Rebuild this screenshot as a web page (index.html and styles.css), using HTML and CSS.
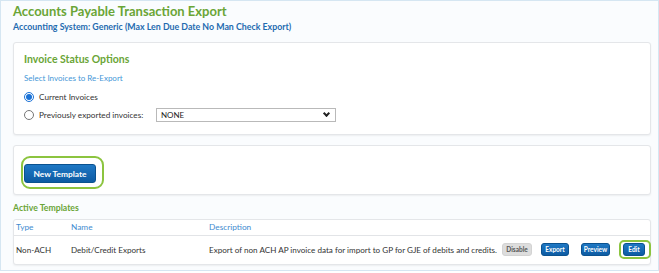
FILE: index.html
```html
<!DOCTYPE html>
<html lang="en">
<head>
    <meta charset="UTF-8">
    <title>Accounts Payable Transaction Export</title>
    <link rel="stylesheet" href="styles.css">
</head>
<body>
    <div class="page">
        <h1 class="page-title">Accounts Payable Transaction Export</h1>
        <div class="system-name">Accounting System: Generic (Max Len Due Date No Man Check Export)</div>

        <div class="panel status-panel">
            <h2 class="panel-title">Invoice Status Options</h2>
            <div class="hint">Select Invoices to Re-Export</div>
            <label class="radio-row">
                <input type="radio" name="status" checked>
                <span>Current Invoices</span>
            </label>
            <label class="radio-row">
                <input type="radio" name="status">
                <span class="radio-label">Previously exported invoices:</span>
                <span class="select-wrap">
                    <select class="export-select">
                        <option>NONE</option>
                    </select>
                </span>
            </label>
        </div>

        <div class="panel template-panel">
            <div class="focus-ring">
                <button class="btn btn-large">New Template</button>
            </div>
        </div>

        <div class="section-title">Active Templates</div>
        <div class="panel table-panel">
            <table class="templates">
                <colgroup>
                    <col class="col-type">
                    <col class="col-name">
                    <col class="col-desc">
                    <col>
                </colgroup>
                <thead>
                    <tr>
                        <th>Type</th>
                        <th>Name</th>
                        <th>Description</th>
                        <th></th>
                    </tr>
                </thead>
                <tbody>
                    <tr>
                        <td>Non-ACH</td>
                        <td>Debit/Credit Exports</td>
                        <td>Export of non ACH AP invoice data for import to GP for GJE of debits and credits.</td>
                        <td>
                            <div class="actions">
                                <button class="btn btn-small btn-grey btn-disable">Disable</button>
                                <button class="btn btn-small btn-export">Export</button>
                                <button class="btn btn-small btn-preview">Preview</button>
                                <span class="focus-ring small-ring"><button class="btn btn-small btn-edit">Edit</button></span>
                            </div>
                        </td>
                    </tr>
                </tbody>
            </table>
        </div>
    </div>
</body>
</html>
```

FILE: styles.css
```css
* {
    margin: 0;
    padding: 0;
    box-sizing: border-box;
    font-family: Lato, 'Open Sans', sans-serif;
}

body {
    background-color: #fff;
    width: 659px;
    height: 273px;
    overflow: hidden;
}

.page {
    background-color: #fafcfe;
    border: 1px solid #d5e6f2;
    height: 271px;
    padding: 1px 7px 0 12px;
}

.page-title {
    color: #6aa536;
    font-size: 13px;
    font-weight: 700;
    line-height: 18px;
}

.system-name {
    color: #1f6bb0;
    font-size: 8.8px;
    font-weight: 700;
    line-height: 14px;
}

.panel {
    background-color: #fff;
    border: 1px solid #e4e6e9;
    border-radius: 3px;
    box-shadow: 0 1px 2px rgba(0, 0, 0, 0.06);
}

.status-panel {
    margin-top: 8px;
    height: 93px;
    padding: 8px 10px 0 10px;
}

.panel-title {
    color: #6aa536;
    font-size: 10.5px;
    font-weight: 700;
    line-height: 16px;
}

.hint {
    color: #4597d7;
    font-size: 8px;
    line-height: 12px;
    margin-top: 5px;
    margin-bottom: 4px;
}

.radio-row {
    display: flex;
    align-items: center;
    height: 18px;
    font-size: 8.2px;
    color: #333;
    white-space: nowrap;
}

.radio-row input {
    width: 10px;
    height: 10px;
    margin: 0 5px 0 0;
    accent-color: #1b72d6;
}

.radio-label {
    width: 117px;
}

.select-wrap {
    position: relative;
    display: inline-flex;
}

.select-wrap::after {
    content: '';
    position: absolute;
    right: 7px;
    top: 3px;
    width: 3px;
    height: 3px;
    border-right: 2px solid #222;
    border-bottom: 2px solid #222;
    transform: rotate(45deg);
    pointer-events: none;
}

.export-select {
    appearance: none;
    width: 180px;
    height: 14px;
    font-size: 8px;
    color: #222;
    border: 1px solid #b9b9b9;
    border-radius: 0;
    padding: 0 0 0 4px;
    background-color: #fff;
}

.template-panel {
    margin-top: 10px;
    height: 50px;
    padding: 10px 0 0 7px;
}

.focus-ring {
    display: inline-flex;
    border: 2px solid #8cc43f;
    border-radius: 9px;
    padding: 6px 6px 4px 1px;
}

.btn {
    background: linear-gradient(#1f78c4, #0d5ba3);
    color: #fff;
    border: 1px solid #0b528f;
    border-radius: 3px;
    font-weight: 700;
    cursor: pointer;
}

.btn-large {
    width: 72px;
    height: 19px;
    font-size: 8.4px;
}

.section-title {
    color: #6aa536;
    font-size: 8.7px;
    font-weight: 700;
    line-height: 14px;
    margin-top: 6px;
}

.table-panel {
    margin-top: 4px;
    height: 46px;
}

.templates {
    width: 100%;
    table-layout: fixed;
    border-collapse: collapse;
    font-size: 8.1px;
}

.col-type {
    width: 55px;
}

.col-name {
    width: 138px;
}

.col-desc {
    width: 293px;
}

.templates th {
    color: #3f8bd0;
    font-weight: 400;
    font-size: 8.3px;
    text-align: left;
    height: 15px;
    padding: 0 0 0 2px;
    border-bottom: 1px solid #e2e4e7;
}

.templates td {
    color: #333;
    height: 29px;
    padding: 0 0 0 2px;
    white-space: nowrap;
    overflow: visible;
}

.actions {
    display: flex;
    align-items: center;
    width: max-content;
}

.btn-small {
    font-size: 6.5px;
    height: 13px;
    padding: 0;
}

.btn-disable {
    width: 30px;
    margin-right: 9px;
}

.btn-export {
    width: 28px;
    margin-right: 12px;
}

.btn-preview {
    width: 29px;
    margin-right: 9px;
}

.btn-edit {
    width: 22px;
}

.btn-grey {
    background: #dddddd;
    color: #555;
    border: 1px solid #d3d3d3;
}

.small-ring {
    padding: 1px 4px 1px 2px;
    border-radius: 5px;
}
```
